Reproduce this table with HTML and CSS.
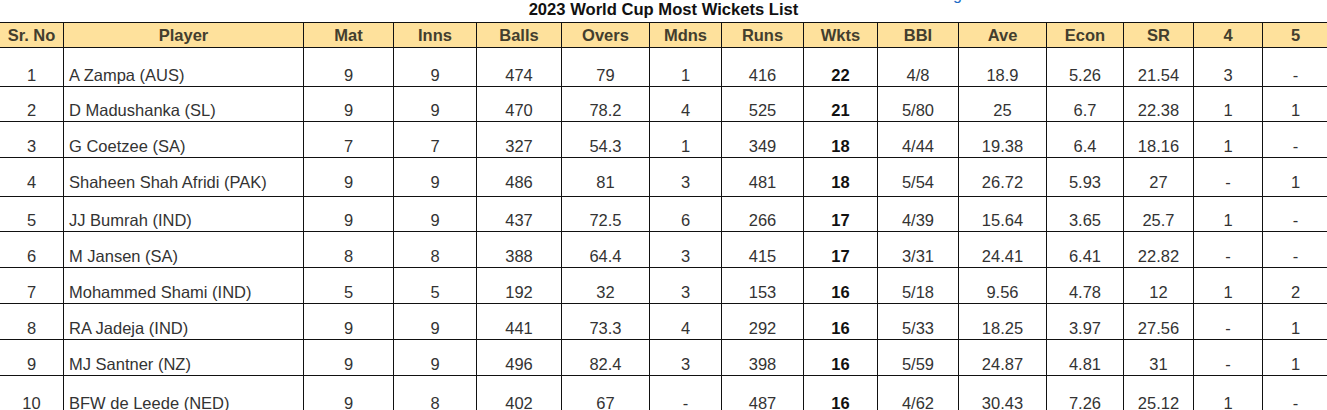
FILE: index.html
```html
<!DOCTYPE html>
<html>
<head>
<meta charset="utf-8">
<link rel="stylesheet" href="styles.css">
</head>
<body>
<div class="overline">ng</div>
<div class="title">2023 World Cup Most Wickets List</div>
<table class="stats">
  <colgroup>
    <col class="c-sr"><col class="c-player"><col class="c-mat"><col class="c-inns"><col class="c-balls"><col class="c-overs"><col class="c-mdns"><col class="c-runs"><col class="c-wkts"><col class="c-bbi"><col class="c-ave"><col class="c-econ"><col class="c-sr2"><col class="c-4"><col class="c-5">
  </colgroup>
  <thead>
    <tr><th>Sr. No</th><th>Player</th><th>Mat</th><th>Inns</th><th>Balls</th><th>Overs</th><th>Mdns</th><th>Runs</th><th>Wkts</th><th>BBI</th><th>Ave</th><th>Econ</th><th>SR</th><th>4</th><th>5</th></tr>
  </thead>
  <tbody>
    <tr class="h39"><td>1</td><td class="name">A Zampa (AUS)</td><td>9</td><td>9</td><td>474</td><td>79</td><td>1</td><td>416</td><td class="wk">22</td><td>4/8</td><td>18.9</td><td>5.26</td><td>21.54</td><td>3</td><td>-</td></tr>
    <tr class="h35"><td>2</td><td class="name">D Madushanka (SL)</td><td>9</td><td>9</td><td>470</td><td>78.2</td><td>4</td><td>525</td><td class="wk">21</td><td>5/80</td><td>25</td><td>6.7</td><td>22.38</td><td>1</td><td>1</td></tr>
    <tr class="h36"><td>3</td><td class="name">G Coetzee (SA)</td><td>7</td><td>7</td><td>327</td><td>54.3</td><td>1</td><td>349</td><td class="wk">18</td><td>4/44</td><td>19.38</td><td>6.4</td><td>18.16</td><td>1</td><td>-</td></tr>
    <tr class="h39 lift"><td>4</td><td class="name">Shaheen Shah Afridi (PAK)</td><td>9</td><td>9</td><td>486</td><td>81</td><td>3</td><td>481</td><td class="wk">18</td><td>5/54</td><td>26.72</td><td>5.93</td><td>27</td><td>-</td><td>1</td></tr>
    <tr class="h35"><td>5</td><td class="name">JJ Bumrah (IND)</td><td>9</td><td>9</td><td>437</td><td>72.5</td><td>6</td><td>266</td><td class="wk">17</td><td>4/39</td><td>15.64</td><td>3.65</td><td>25.7</td><td>1</td><td>-</td></tr>
    <tr class="h36"><td>6</td><td class="name">M Jansen (SA)</td><td>8</td><td>8</td><td>388</td><td>64.4</td><td>3</td><td>415</td><td class="wk">17</td><td>3/31</td><td>24.41</td><td>6.41</td><td>22.82</td><td>-</td><td>-</td></tr>
    <tr class="h36"><td>7</td><td class="name">Mohammed Shami (IND)</td><td>5</td><td>5</td><td>192</td><td>32</td><td>3</td><td>153</td><td class="wk">16</td><td>5/18</td><td>9.56</td><td>4.78</td><td>12</td><td>1</td><td>2</td></tr>
    <tr class="h36"><td>8</td><td class="name">RA Jadeja (IND)</td><td>9</td><td>9</td><td>441</td><td>73.3</td><td>4</td><td>292</td><td class="wk">16</td><td>5/33</td><td>18.25</td><td>3.97</td><td>27.56</td><td>-</td><td>1</td></tr>
    <tr class="h36"><td>9</td><td class="name">MJ Santner (NZ)</td><td>9</td><td>9</td><td>496</td><td>82.4</td><td>3</td><td>398</td><td class="wk">16</td><td>5/59</td><td>24.87</td><td>4.81</td><td>31</td><td>-</td><td>1</td></tr>
    <tr class="h39"><td>10</td><td class="name">BFW de Leede (NED)</td><td>9</td><td>8</td><td>402</td><td>67</td><td>-</td><td>487</td><td class="wk">16</td><td>4/62</td><td>30.43</td><td>7.26</td><td>25.12</td><td>1</td><td>-</td></tr>
  </tbody>
</table>
</body>
</html>
```

FILE: styles.css
```css
html, body {
  margin: 0;
  padding: 0;
  background: #ffffff;
}
body {
  font-family: "Liberation Sans", Arial, sans-serif;
  overflow: hidden;
}
.overline {
  margin-top: -13px;
  height: 13px;
  padding-left: 944px;
  color: #1f6cc6;
  font-size: 16px;
  line-height: 15px;
  white-space: nowrap;
}
.title {
  height: 22px;
  line-height: 20px;
  text-align: center;
  font-weight: bold;
  font-size: 16.6px;
  color: #111111;
}
.stats {
  border-collapse: collapse;
  table-layout: fixed;
  margin-left: -1px;
  width: 1329px;
  font-size: 16.5px;
  color: #333333;
}
.stats th, .stats td {
  border: 1px solid #111111;
  padding: 0 2px;
  text-align: center;
  white-space: nowrap;
  overflow: hidden;
}
.stats th {
  background: #fee19c;
  color: #433e2e;
  font-weight: bold;
  height: 24px;
  line-height: 20px;
  vertical-align: middle;
  padding-top: 0;
}
.stats td {
  vertical-align: bottom;
  line-height: 18px;
  padding-bottom: 2px;
}
.stats td.name {
  text-align: left;
  padding-left: 5px;
}
.stats td.wk {
  font-weight: bold;
  color: #111111;
}
.h39 td { height: 36px; }
.h35 td { height: 32px; }
.h36 td { height: 33px; }
.h39.lift td { height: 33px; padding-bottom: 5px; }

.c-sr { width: 64px; }
.c-player { width: 240px; }
.c-mat { width: 90px; }
.c-inns { width: 83px; }
.c-balls { width: 85px; }
.c-overs { width: 88px; }
.c-mdns { width: 72px; }
.c-runs { width: 82px; }
.c-wkts { width: 74px; }
.c-bbi { width: 81px; }
.c-ave { width: 88px; }
.c-econ { width: 77px; }
.c-sr2 { width: 70px; }
.c-4 { width: 69px; }
.c-5 { width: 66px; }
```
